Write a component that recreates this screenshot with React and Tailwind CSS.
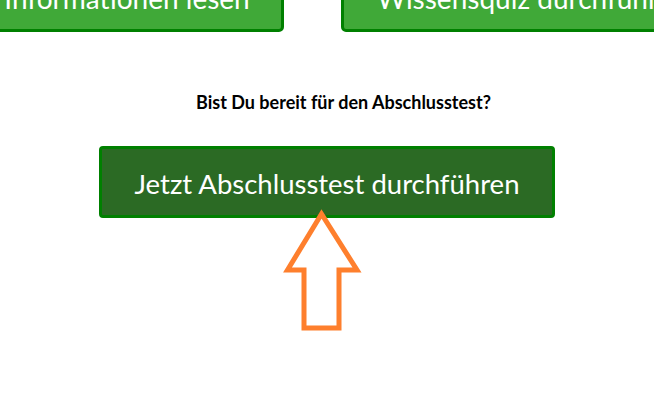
import React from 'react';

const ArrowUp = () => (
  <svg width="81" height="124" viewBox="0 0 81 124" className="block">
    <polygon
      points="39.5,5 5.5,61 22,61 22,119 57,119 57,61 75,61"
      fill="none"
      stroke="#fe7f2d"
      strokeWidth="5"
      strokeLinejoin="miter"
    />
  </svg>
);

export default function App() {
  return (
    <div className="relative h-[411px] w-full overflow-hidden bg-white font-['Lato','Open_Sans',sans-serif]">
      {/* nav buttons, mostly scrolled out of view */}
      <div className="-mt-[30px] flex gap-[57px]">
        <button className="-ml-[60px] h-[62px] w-[344px] shrink-0 rounded-[5px] border-[3px] border-[#008000] bg-[#40a938] pb-[6px] pl-[30px] text-[28px] leading-none text-white">
          Informationen lesen
        </button>
        <button className="h-[62px] w-[380px] shrink-0 rounded-[5px] border-[3px] border-[#008000] bg-[#40a938] pb-[6px] pl-[33px] text-left text-[28px] leading-none text-white">
          Wissensquiz durchführen
        </button>
      </div>

      <div className="flex flex-col items-center">
        <p className="mt-[58px] pl-[33px] text-[18px] font-bold leading-[24px] text-black">
          Bist Du bereit für den Abschlusstest?
        </p>
        <button className="mt-[32px] flex h-[72px] w-[456px] items-center justify-center rounded-[4px] border-[3px] border-[#008000] bg-[#2b6a24] pt-[4px] text-[27.5px] text-white">
          Jetzt Abschlusstest durchführen
        </button>
        <div className="-mt-[9px] -ml-[9px]">
          <ArrowUp />
        </div>
      </div>
    </div>
  );
}
